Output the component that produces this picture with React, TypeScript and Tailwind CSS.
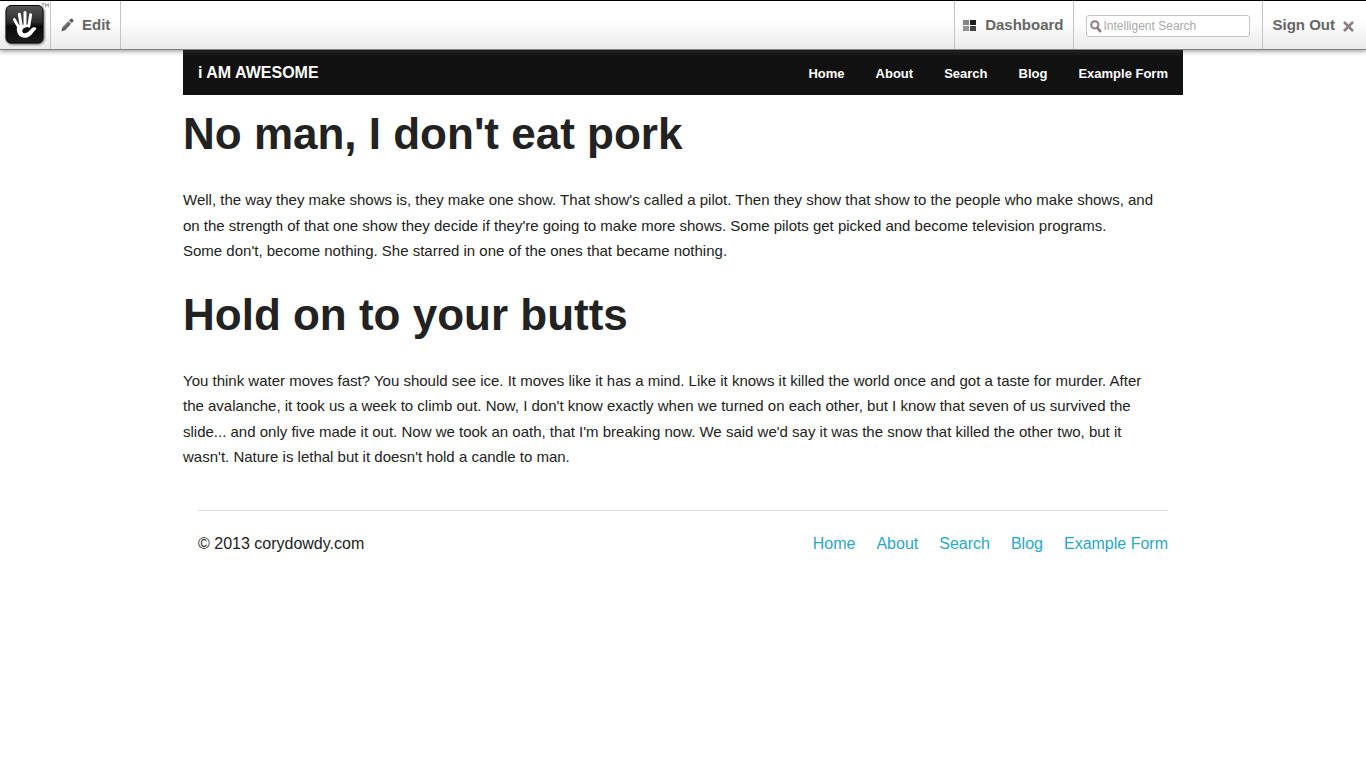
import React from "react";

const links = ["Home", "About", "Search", "Blog", "Example Form"];

function HandLogo() {
  return (
    <svg width="49" height="48" viewBox="0 0 49 48" className="block" aria-hidden="true">
      <defs>
        <linearGradient id="tile" x1="0" y1="0" x2="0" y2="1">
          <stop offset="0" stopColor="#555" />
          <stop offset="0.45" stopColor="#2c2c2c" />
          <stop offset="0.55" stopColor="#080808" />
          <stop offset="1" stopColor="#1c1c1c" />
        </linearGradient>
        <filter id="tileShadow" x="-20%" y="-20%" width="140%" height="140%">
          <feGaussianBlur stdDeviation="0.9" />
        </filter>
      </defs>
      <rect x="6" y="5.5" width="38.5" height="38" rx="6" fill="#000" opacity="0.6" filter="url(#tileShadow)" />
      <rect x="6" y="4.5" width="37" height="37.5" rx="5" fill="url(#tile)" stroke="#080808" />
      <g fill="none" stroke="#fff" strokeLinecap="round" strokeLinejoin="round">
        <path d="M14.4 18.6 L18.6 26" strokeWidth="2.9" />
        <path d="M19.4 13.2 L21.2 25" strokeWidth="3" />
        <path d="M25 11.6 L25 25" strokeWidth="3" />
        <path d="M30.6 13.8 L28.8 25" strokeWidth="3" />
      </g>
      <path
        d="M17.2 24 L30.3 23.6 L29.9 26.4 C26 25.4 22.8 27 22.3 29.4 C21.9 32 24.4 33 27.2 31.6 C29.8 30.2 30.8 26.8 34 26.2 C36.4 25.8 37 27.6 35.4 29 C32.6 31.6 31 36.4 25.2 36.8 C19.6 37 17 33 16.8 28.6 Z"
        fill="#fff"
      />
      <g stroke="#888" strokeWidth="0.8" fill="none">
        <path d="M41.5 2.5h3M43 2.5v4M45.5 6.5v-4l1.4 2.4 1.4-2.4v4" />
      </g>
    </svg>
  );
}

function PencilIcon() {
  return (
    <svg width="13" height="14" viewBox="0 0 13 14" className="block" aria-hidden="true">
      <path d="M0.4 13.5 L1.3 9.6 L7.2 3.2 L10 5.8 L4.1 12.3 Z" fill="#5c5c5c" />
      <path d="M8 2.4 L9.6 0.8 Q10.6 0.2 11.5 1.1 L12.3 1.9 Q13 2.8 12.2 3.6 L10.8 5 Z" fill="#5c5c5c" />
      <path d="M2.2 10.2 L7.6 4.6" stroke="#aaa" strokeWidth="0.7" />
    </svg>
  );
}

function TilesIcon() {
  return (
    <svg width="13" height="14" viewBox="0 0 13 14" className="block" aria-hidden="true">
      <rect y="2" width="6" height="5" fill="#858585" />
      <rect x="7" y="2" width="6" height="5" fill="#1f1c1d" />
      <rect y="8" width="6" height="5" fill="#929196" />
      <rect x="7" y="8" width="6" height="5" fill="#454344" />
    </svg>
  );
}

function MagnifierIcon() {
  return (
    <svg width="12" height="13" viewBox="0 0 12 13" className="block shrink-0" aria-hidden="true">
      <circle cx="4.8" cy="4.8" r="3.6" fill="none" stroke="#8c7f7f" strokeWidth="2" />
      <path d="M7.4 7.8 L10.2 11.2" stroke="#8c7f7f" strokeWidth="2.6" strokeLinecap="round" />
    </svg>
  );
}

function CloseIcon() {
  return (
    <svg width="11" height="13" viewBox="0 0 11 13" className="block" aria-hidden="true">
      <path d="M1.8 3.8 L9.2 11.2 M9.2 3.8 L1.8 11.2" stroke="#8c8080" strokeWidth="2.7" strokeLinecap="round" />
    </svg>
  );
}

function Toolbar() {
  return (
    <header className="relative z-10 flex h-[50px] border-t border-b border-t-black border-b-[#808080] bg-linear-to-b from-white from-40% to-[#ebebeb] text-[15px] font-bold text-[#666] shadow-[0_1px_5px_rgba(0,0,0,0.45)]">
      <a href="#" aria-label="Home" className="w-[51px] border-r border-[#c4c4c4]">
        <HandLogo />
      </a>
      <button type="button" className="flex w-[70px] items-center gap-2 border-r border-[#c4c4c4] pl-[10px]">
        <PencilIcon />
        <span>Edit</span>
      </button>
      <div className="ml-auto flex">
        <a href="#" className="flex items-center gap-[9px] border-l border-[#c4c4c4] pr-[9px] pl-2">
          <TilesIcon />
          <span>Dashboard</span>
        </a>
        <form role="search" className="flex items-center border-x border-[#c4c4c4] px-3 pt-[2px]">
          <label className="flex h-[22px] w-[164px] items-center gap-[2px] rounded-[3px] border border-[#c4c4c4] bg-white pl-[3px]">
            <MagnifierIcon />
            <input
              type="search"
              aria-label="Intelligent Search"
              placeholder="Intelligent Search"
              className="h-5 w-full min-w-0 bg-transparent text-[12px] font-normal text-[#444] outline-none placeholder:text-[#aaa]"
            />
          </label>
        </form>
        <button type="button" className="flex items-center gap-2 pr-3 pl-[10px]">
          <span>Sign Out</span>
          <CloseIcon />
        </button>
      </div>
    </header>
  );
}

function LineBreak() {
  return <br className="max-lg:hidden" />;
}

export default function App() {
  return (
    <div className="min-h-screen bg-white font-['Liberation_Sans',Arial,sans-serif] text-[16px] leading-[1.6] text-[#222]">
      <Toolbar />
      <div className="mx-auto max-w-[1000px]">
        <nav className="flex h-[45px] items-baseline justify-between bg-[#111] bg-linear-to-b from-[#2a2a2a] to-[#111] to-15% px-[15px] pt-[10px] text-white">
          <a href="#" className="text-[16px] font-bold">i AM AWESOME</a>
          <ul className="flex gap-[31px] text-[13px] font-bold">
            {links.map((l) => (
              <li key={l}><a href="#">{l}</a></li>
            ))}
          </ul>
        </nav>
        <main className="text-[15px] leading-[1.7]">
          <h1 className="mt-2 mb-[22px] text-[44px] leading-[62px] font-bold">No man, I don't eat pork</h1>
          <p className="mb-5">
            Well, the way they make shows is, they make one show. That show's called a pilot. Then they show that show to the people who make shows, and{" "}
            <LineBreak />
            on the strength of that one show they decide if they're going to make more shows. Some pilots get picked and become television programs.{" "}
            <LineBreak />
            Some don't, become nothing. She starred in one of the ones that became nothing.
          </p>
          <h1 className="mb-[22px] text-[44px] leading-[62px] font-bold">Hold on to your butts</h1>
          <p>
            You think water moves fast? You should see ice. It moves like it has a mind. Like it knows it killed the world once and got a taste for murder. After{" "}
            <LineBreak />
            the avalanche, it took us a week to climb out. Now, I don't know exactly when we turned on each other, but I know that seven of us survived the{" "}
            <LineBreak />
            slide... and only five made it out. Now we took an oath, that I'm breaking now. We said we'd say it was the snow that killed the other two, but it{" "}
            <LineBreak />
            wasn't. Nature is lethal but it doesn't hold a candle to man.
          </p>
        </main>
        <footer className="mx-[15px] mt-10 flex justify-between border-t border-[#ddd] pt-5">
          <p>© 2013 corydowdy.com</p>
          <ul className="flex gap-[21px] text-[#2ba6cb]">
            {links.map((l) => (
              <li key={l}><a href="#">{l}</a></li>
            ))}
          </ul>
        </footer>
      </div>
    </div>
  );
}
